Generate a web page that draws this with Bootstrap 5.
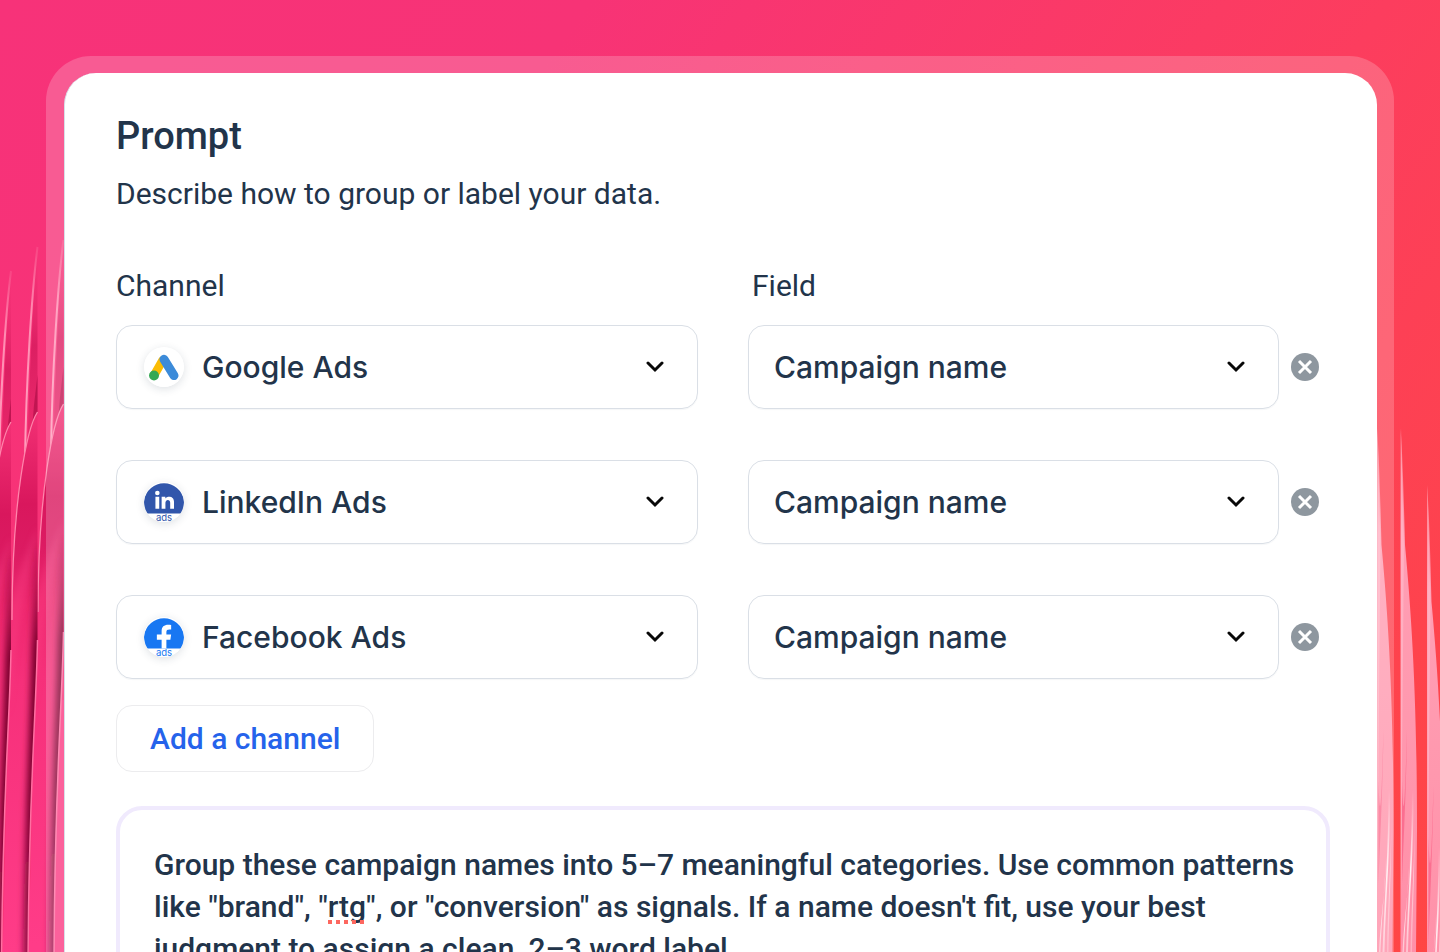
<!DOCTYPE html>
<html lang="en">
<head>
<meta charset="utf-8">
<meta name="viewport" content="width=device-width, initial-scale=1">
<title>Prompt</title>
<link rel="stylesheet" href="https://cdn.jsdelivr.net/npm/bootstrap@5.3.0/dist/css/bootstrap.min.css">
<style>
  body {
    --ink: #22344a;
    color: var(--ink);
    font-family: Roboto, "Liberation Sans", sans-serif;
    font-size: 30px;
    line-height: 42px;
    background: linear-gradient(125deg, #f73279 0%, #f73376 28%, #fc3d5e 66%, #ff4644 100%);
  }
  .stage { padding: 56px 46px 0; }
  .blades { bottom: 0; }
  .frame { background: rgba(255, 255, 255, .2); border-radius: 45px 45px 0 0; padding: 17px 17px 0 18px; z-index: 1; }
  .panel { border-radius: 32px 32px 0 0; padding: 37px 47px 0 51px; border-left: 1px solid #d5e0e8; }
  .panel-title { font-size: 38px; line-height: 52px; font-weight: 500; }
  .panel-text { margin: 11px 0 50px; }
  .rule-grid { display: grid; grid-template-columns: minmax(0, 632fr) minmax(0, 543fr) 39px; align-items: center; }
  .channel-col { margin-right: 50px; }
  .field-col { margin-right: 12px; }
  .labels { margin-bottom: 18px; }
  .rules { gap: 51px; }
  .picker { height: 84px; border: 1px solid #dadfe6; border-radius: 16px; padding: 0 26px; gap: 18px; box-shadow: 0 1px 1px rgba(34, 52, 74, .04); }
  .picker.channel-col { padding-left: 27px; }
  .picker.field-col { padding-left: 25px; }
  .picker .form-select {
    font-family: Inter, "Liberation Sans", sans-serif;
    font-size: 30px; line-height: 42px; font-weight: 500; color: var(--ink);
    background-image: url("data:image/svg+xml,%3Csvg xmlns='http://www.w3.org/2000/svg' viewBox='0 0 18 12'%3E%3Cpath d='M2 2l7 7 7-7' fill='none' stroke='%23080808' stroke-width='3' stroke-linecap='round'/%3E%3C/svg%3E");
    background-size: 18px 12px; background-position: right 7px center;
  }
  .logo { width: 40px; height: 40px; border-radius: 50%; box-shadow: 0 2px 8px rgba(34, 52, 74, .15); }
  .logo text { font-family: Inter, sans-serif; }
  .add-btn { margin: 26px 0 34px; height: 67px; padding: 0 33px; border: 1px solid #ececee; border-radius: 16px; font-size: 30px; line-height: 42px; font-weight: 500; color: #2563eb; }
  .prompt-box { border: 4px solid #f0eafd; border-radius: 26px; padding: 34px 26px 34px 34px; line-height: 42px; font-size: 30px; font-weight: 500; color: var(--ink); resize: none; overflow: hidden; }
  .typo { left: 212px; top: 114px; width: 36px; height: 4px; background: repeating-linear-gradient(90deg, #fd675f 0 4px, transparent 4px 8px); }
</style>
</head>
<body class="vh-100 overflow-hidden position-relative">

<svg class="blades position-absolute start-0" width="64" height="712" viewBox="0 240 64 712" aria-hidden="true">
  <defs>
    <linearGradient id="tip" x1="0" x2="0" y1="0" y2="1"><stop offset="0" stop-color="#ee2e70" stop-opacity="0"/><stop offset=".45" stop-color="#d91d60" stop-opacity=".9"/><stop offset="1" stop-color="#ef2c6e"/></linearGradient>
    <linearGradient id="body" x1="0" x2="0" y1="412" y2="952" gradientUnits="userSpaceOnUse"><stop offset="0" stop-color="#f33175"/><stop offset=".17" stop-color="#d9175d"/><stop offset=".26" stop-color="#dc1b62"/><stop offset=".36" stop-color="#ee276e"/><stop offset=".5" stop-color="#f6307a"/><stop offset="1" stop-color="#ff3c88"/></linearGradient>
    <linearGradient id="fade" x1="0" x2="0" y1="0" y2="1"><stop offset="0" stop-color="#ff8db2" stop-opacity=".2"/><stop offset=".3" stop-color="#ff8db2"/><stop offset="1" stop-color="#ffa0be"/></linearGradient>
    <linearGradient id="shade" x1="0" x2="0" y1="540" y2="970" gradientUnits="userSpaceOnUse"><stop offset="0" stop-color="#7c002e" stop-opacity="0"/><stop offset=".25" stop-color="#7c002e"/><stop offset=".6" stop-color="#7c002e"/><stop offset="1" stop-color="#98124a"/></linearGradient>
    <filter id="soft" filterUnits="userSpaceOnUse" x="-30" y="380" width="110" height="640"><feGaussianBlur stdDeviation="3"/></filter>
    <clipPath id="bodyClip"><path d="M37.500 412C27 428 12 500 11 620L2 980H28C28 800 36 720 37.500 640Z"/></clipPath>
    <g id="tipBlade">
      <path d="M37.500 250C34 280 29 380 27 462L37.500 412Z" fill="url(#tip)"/>
      <path d="M37.500 375L34 405L32 430L37.500 412Z" fill="#a60b43" opacity=".6"/>
      <path d="M37.500 247C32 290 26 380 25 462" fill="none" stroke="url(#fade)" stroke-width="2"/>
    </g>
    <g id="bodyBlade">
      <g clip-path="url(#bodyClip)">
        <path d="M0 400H40V990H0Z" fill="url(#body)"/>
        <path d="M38 525C30 580 16 620 9 720V610C18 570 32 540 38 525Z" fill="#ff4a8c" opacity=".3" filter="url(#soft)"/>
        <path d="M40 540C38 720 29 800 29 1000" fill="none" stroke="url(#shade)" stroke-width="12" filter="url(#soft)"/>
      </g>
      <path d="M37.500 412C27 428 12 500 12 620" fill="none" stroke="#ff84ab" stroke-width="1.300"/>
      <path d="M37.500 640C36 720 28 800 28 980" fill="none" stroke="#ff6fa2" stroke-width="1.500"/>
    </g>
  </defs>
  <path d="M56 700H64V952H50Z" fill="#fb3a82"/>
  <use href="#tipBlade" x="26" y="-8"/>
  <use href="#bodyBlade" x="26" y="-8"/>
  <use href="#tipBlade"/>
  <use href="#bodyBlade"/>
  <use href="#tipBlade" x="-26.500" y="24"/>
  <use href="#bodyBlade" x="-26.500" y="10"/>
</svg>

<svg class="blades position-absolute end-0" width="63" height="552" viewBox="1377 400 63 552" aria-hidden="true">
  <defs>
    <linearGradient id="petal" x1="0" x2="0" y1="428" y2="952" gradientUnits="userSpaceOnUse"><stop offset="0" stop-color="#ff8fa0" stop-opacity=".6"/><stop offset=".2" stop-color="#ff9fb4"/><stop offset=".55" stop-color="#ff98ae"/><stop offset="1" stop-color="#ff8fa8"/></linearGradient>
    <linearGradient id="glow" x1="0" x2="0" y1="0" y2="1"><stop offset="0" stop-color="#fff" stop-opacity="0"/><stop offset=".5" stop-color="#fff" stop-opacity=".85"/><stop offset="1" stop-color="#fff" stop-opacity=".45"/></linearGradient>
    <g id="petals">
      <path d="M1400.500 428C1403 460 1404 510 1405 545C1411 610 1417 690 1417 830L1416 952H1400.500Z" fill="url(#petal)"/>
      <path d="M1401 428L1404 545L1402 760L1401 900Z" fill="#ffc3d1" opacity=".5"/>
      <path d="M1402 780C1404 850 1406 760 1407 730C1406 800 1403 850 1402 890Z" fill="#fa5f84" opacity=".7"/>
      <path d="M1412 790H1413.500C1414 850 1409 900 1408 952H1406C1408 900 1412 850 1412 790Z" fill="url(#glow)"/>
      <path d="M1410 850C1408 890 1405 920 1404 952H1402.500C1404 920 1409 890 1410 850Z" fill="url(#glow)"/>
      <path d="M1415 800C1415 860 1413 900 1412 952H1410.500C1411 910 1415 860 1415 800Z" fill="url(#glow)" opacity=".6"/>
    </g>
  </defs>
  <use href="#petals" x="-23.500"/>
  <use href="#petals"/>
  <use href="#petals" x="26.500" y="57"/>
</svg>

<main class="stage h-100">
  <div class="frame h-100 position-relative">
    <form class="panel bg-white h-100 overflow-hidden">
      <h1 class="panel-title mb-0">Prompt</h1>
      <p class="panel-text">Describe how to group or label your data.</p>

      <div class="labels rule-grid">
        <label class="channel-col" for="channel1">Channel</label>
        <label class="field-col ps-1" for="field1">Field</label>
      </div>

      <div class="rules d-flex flex-column">
        <div class="rule-grid">
          <div class="picker channel-col d-flex align-items-center">
            <svg class="logo flex-shrink-0" viewBox="0 0 42 42" aria-hidden="true">
              <circle cx="21" cy="21" r="21" fill="#fff"/>
              <path d="M19.500 14L11 29" stroke="#fbbc04" stroke-width="9" stroke-linecap="round"/>
              <path d="M21 13L31.500 30" stroke="#3c8bd9" stroke-width="9.500" stroke-linecap="round"/>
              <circle cx="10.500" cy="30" r="5.200" fill="#34a853"/>
            </svg>
            <select class="form-select border-0 shadow-none p-0" id="channel1"><option>Google Ads</option><option>LinkedIn Ads</option><option>Facebook Ads</option></select>
          </div>
          <div class="picker field-col d-flex align-items-center">
            <select class="form-select border-0 shadow-none p-0" id="field1"><option>Campaign name</option></select>
          </div>
          <button type="button" class="btn border-0 p-0 d-flex" aria-label="Remove Google Ads"><svg width="28" height="28" viewBox="0 0 28 28"><circle cx="14" cy="14" r="14" fill="#8e979f"/><path d="M8 8l12 12M20 8L8 20" stroke="#fff" stroke-width="3"/></svg></button>
        </div>

        <div class="rule-grid">
          <div class="picker channel-col d-flex align-items-center">
            <svg class="logo flex-shrink-0" viewBox="0 0 42 42" aria-hidden="true">
              <circle cx="21" cy="21" r="21" fill="#fff"/>
              <path d="M3 33A21 21 0 1 1 39 33Z" fill="#3156ab"/>
              <circle cx="14" cy="11.500" r="2.400" fill="#fff"/>
              <path d="M12 15.500h4V28h-4zM18.500 15.500h3.900v1.700c1.700-2.600 9.100-3 9.100 3.500V28h-4v-6.200c0-4.200-5-3.800-5 0V28h-4z" fill="#fff"/>
              <text x="21" y="41" text-anchor="middle" font-size="10" fill="#3156ab">ads</text>
            </svg>
            <select class="form-select border-0 shadow-none p-0" aria-label="Channel 2"><option>LinkedIn Ads</option><option>Google Ads</option><option>Facebook Ads</option></select>
          </div>
          <div class="picker field-col d-flex align-items-center">
            <select class="form-select border-0 shadow-none p-0" aria-label="Field 2"><option>Campaign name</option></select>
          </div>
          <button type="button" class="btn border-0 p-0 d-flex" aria-label="Remove LinkedIn Ads"><svg width="28" height="28" viewBox="0 0 28 28"><circle cx="14" cy="14" r="14" fill="#8e979f"/><path d="M8 8l12 12M20 8L8 20" stroke="#fff" stroke-width="3"/></svg></button>
        </div>

        <div class="rule-grid">
          <div class="picker channel-col d-flex align-items-center">
            <svg class="logo flex-shrink-0" viewBox="0 0 42 42" aria-hidden="true">
              <circle cx="21" cy="21" r="21" fill="#fff"/>
              <path d="M3 33A21 21 0 1 1 39 33Z" fill="#1877f2"/>
              <path d="M18.500 33V24H13.500V18.500h5V15c0-5.500 3.500-7.500 10-6.500v4.700c-4-.3-5 .3-5 2.800v2.500h5l-.8 5.500h-4.200V33Z" fill="#fff"/>
              <text x="21" y="41" text-anchor="middle" font-size="10" fill="#1877f2">ads</text>
            </svg>
            <select class="form-select border-0 shadow-none p-0" aria-label="Channel 3"><option>Facebook Ads</option><option>Google Ads</option><option>LinkedIn Ads</option></select>
          </div>
          <div class="picker field-col d-flex align-items-center">
            <select class="form-select border-0 shadow-none p-0" aria-label="Field 3"><option>Campaign name</option></select>
          </div>
          <button type="button" class="btn border-0 p-0 d-flex" aria-label="Remove Facebook Ads"><svg width="28" height="28" viewBox="0 0 28 28"><circle cx="14" cy="14" r="14" fill="#8e979f"/><path d="M8 8l12 12M20 8L8 20" stroke="#fff" stroke-width="3"/></svg></button>
        </div>
      </div>

      <button type="button" class="add-btn btn d-block">Add a channel</button>

      <div class="position-relative">
        <textarea class="prompt-box form-control shadow-none" rows="5" spellcheck="false" aria-label="Prompt">Group these campaign names into 5–7 meaningful categories. Use common patterns like "brand", "rtg", or "conversion" as signals. If a name doesn't fit, use your best judgment to assign a clean, 2–3 word label.</textarea>
        <span class="typo position-absolute" aria-hidden="true"></span>
      </div>
    </form>
  </div>
</main>

<script src="https://cdn.jsdelivr.net/npm/bootstrap@5.3.0/dist/js/bootstrap.bundle.min.js"></script>
</body>
</html>
